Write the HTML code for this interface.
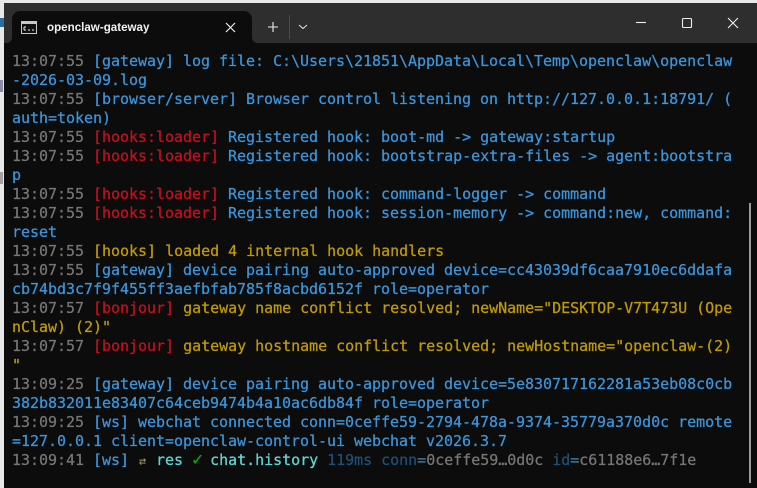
<!DOCTYPE html>
<html><head><meta charset="utf-8"><style>
html,body{margin:0;padding:0;width:757px;height:488px;overflow:hidden;background:#e8e8e8;position:relative}
#win{position:absolute;left:4px;top:3px;width:753px;height:485px;background:#0c0c0c}
#bar{position:absolute;left:0;top:0;width:753px;height:40px;background:#2e2e2e}
#tab{position:absolute;left:8px;top:8px;width:240px;height:32px;background:#0c0c0c;border-radius:8px 8px 0 0}
#title{position:absolute;left:47px;top:19px;font:bold 11.6px/18px "Liberation Sans",sans-serif;color:#f2f2f2;white-space:pre}
svg{position:absolute;left:0;top:0}
#t{position:absolute;left:0;top:0;font:15px/19px "DejaVu Sans Mono",monospace;letter-spacing:-0.03px;color:#3a96dd;white-space:pre;-webkit-text-stroke:0.25px currentColor}
.l{position:absolute;left:12px;height:19px}
.g{color:#767676}.r{color:#c50f1f}.y{color:#c19c00}.c{color:#61d6d6}.v{color:#13a10e}.d{color:#1f4f78}.o{color:#767676}
.w{display:inline-block;width:9px;text-align:center;overflow:visible;vertical-align:baseline;line-height:15px}
#sb{position:absolute;left:749px;top:203px;width:2px;height:280px;background:#9a9a9a}
</style></head><body>
<div style="position:absolute;left:0;top:18px;width:4px;height:9px;background:#2f6aa0"></div>
<div style="position:absolute;left:0;top:80px;width:3px;height:12px;background:#8c8ca8"></div>
<div style="position:absolute;left:0;top:172px;width:3px;height:12px;background:#a8a0a0"></div>
<div id="win"><div id="bar"></div><div id="tab"></div></div>
<div id="title">openclaw-gateway</div>
<svg width="757" height="488" viewBox="0 0 757 488">
<path d="M6 43Q12 43 12 37V43ZM252 37Q252 43 258 43H252Z" fill="#0c0c0c"/>
<rect x="21.500" y="21.500" width="15" height="12" fill="#111" stroke="#c8c8c8"/><rect x="22" y="22" width="14" height="2" fill="#c8c8c8"/>
<path d="M24 27h2M24 30h2M24 27v3M28 30h2M32 30h2" stroke="#eee" fill="none"/>
<path d="M226 23l9 9M235 23l-9 9" stroke="#eee" stroke-width="1.2" fill="none"/>
<path d="M273 22v10M268 27h10" stroke="#eee" stroke-width="1.1" fill="none"/>
<path d="M289.500 15v24" stroke="#4a4a4a" fill="none"/>
<path d="M299 25l4 3.500l4-3.500" stroke="#ddd" stroke-width="1.1" fill="none"/>
<path d="M636 22.500h10" stroke="#eee" stroke-width="1.1" fill="none"/>
<rect x="682.500" y="18.500" width="9" height="9" rx="1" stroke="#eee" stroke-width="1.1" fill="none"/>
<path d="M728 18l10 10M738 18l-10 10" stroke="#eee" stroke-width="1.1" fill="none"/>
</svg>
<div id="t">
<div class="l" style="top:52px"><span class="g">13:07:55</span> [gateway] log file: C:\Users\21851\AppData\Local\Temp\openclaw\openclaw</div>
<div class="l" style="top:71px">-2026-03-09.log</div>
<div class="l" style="top:90px"><span class="g">13:07:55</span> [browser/server] Browser control listening on http://127.0.0.1:18791/ (</div>
<div class="l" style="top:109px">auth=token)</div>
<div class="l" style="top:128px"><span class="g">13:07:55</span> <span class="r">[hooks:loader]</span> Registered hook: boot-md -&gt; gateway:startup</div>
<div class="l" style="top:147px"><span class="g">13:07:55</span> <span class="r">[hooks:loader]</span> Registered hook: bootstrap-extra-files -&gt; agent:bootstra</div>
<div class="l" style="top:166px">p</div>
<div class="l" style="top:185px"><span class="g">13:07:55</span> <span class="r">[hooks:loader]</span> Registered hook: command-logger -&gt; command</div>
<div class="l" style="top:204px"><span class="g">13:07:55</span> <span class="r">[hooks:loader]</span> Registered hook: session-memory -&gt; command:new, command:</div>
<div class="l" style="top:223px">reset</div>
<div class="l" style="top:242px"><span class="g">13:07:55</span> <span class="y">[hooks]</span> <span class="y">loaded 4 internal hook handlers</span></div>
<div class="l" style="top:261px"><span class="g">13:07:55</span> [gateway] device pairing auto-approved device=cc43039df6caa7910ec6ddafa</div>
<div class="l" style="top:280px">cb74bd3c7f9f455ff3aefbfab785f8acbd6152f role=operator</div>
<div class="l" style="top:299px"><span class="g">13:07:57</span> <span class="r">[bonjour]</span> <span class="y">gateway name conflict resolved; newName="DESKTOP-V7T473U (Ope</span></div>
<div class="l y" style="top:318px">nClaw) (2)"</div>
<div class="l" style="top:337px"><span class="g">13:07:57</span> <span class="r">[bonjour]</span> <span class="y">gateway hostname conflict resolved; newHostname="openclaw-(2)</span></div>
<div class="l y" style="top:356px">"</div>
<div class="l" style="top:375px"><span class="g">13:09:25</span> [gateway] device pairing auto-approved device=5e830717162281a53eb08c0cb</div>
<div class="l" style="top:394px">382b832011e83407c64ceb9474b4a10ac6db84f role=operator</div>
<div class="l" style="top:413px"><span class="g">13:09:25</span> [ws] webchat connected conn=0ceffe59-2794-478a-9374-35779a370d0c remote</div>
<div class="l" style="top:432px">=127.0.0.1 client=openclaw-control-ui webchat v2026.3.7</div>
<div class="l" style="top:451px"><span class="g">13:09:41</span> [ws] <span class="w" style="color:#a89a70;font-size:12px;-webkit-text-stroke:0">⇄</span> <span class="c">res</span> <span class="w v" style="font-size:18px">✓</span> <span class="c">chat.history</span> <span class="d">119ms</span> <span class="d">conn</span><span style="color:#3a7a9a">=</span><span class="o">0ceffe59…0d0c</span> <span class="d">id</span><span style="color:#3a7a9a">=</span><span class="o">c61188e6…7f1e</span></div>
</div>
<div id="sb"></div>
</body></html>
